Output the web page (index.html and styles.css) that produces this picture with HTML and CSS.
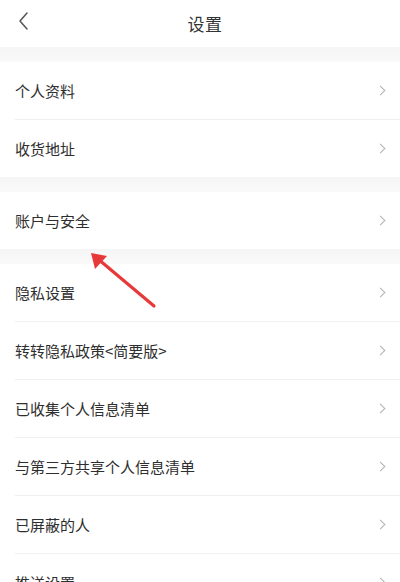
FILE: index.html
```html
<!DOCTYPE html>
<html lang="zh">
<head>
<meta charset="utf-8">
<link rel="stylesheet" href="styles.css">
</head>
<body>
<div class="page">
  <header class="topbar">
    <svg class="back" width="12" height="20" viewBox="0 0 12 20"><path d="M10 2 L3 10 L10 18" fill="none" stroke="#555" stroke-width="1.5" stroke-linecap="round" stroke-linejoin="round"/></svg>
    <div class="title">设置</div>
  </header>
  <div class="gap"></div>
  <div class="group">
    <div class="row"><span>个人资料</span><i class="chev"></i></div>
    <div class="row"><span>收货地址</span><i class="chev"></i></div>
  </div>
  <div class="gap"></div>
  <div class="group">
    <div class="row"><span>账户与安全</span><i class="chev"></i></div>
  </div>
  <div class="gap"></div>
  <div class="group">
    <div class="row"><span>隐私设置</span><i class="chev"></i></div>
    <div class="row"><span>转转隐私政策&lt;简要版&gt;</span><i class="chev"></i></div>
    <div class="row"><span>已收集个人信息清单</span><i class="chev"></i></div>
    <div class="row"><span>与第三方共享个人信息清单</span><i class="chev"></i></div>
    <div class="row"><span>已屏蔽的人</span><i class="chev"></i></div>
    <div class="row"><span>推送设置</span><i class="chev"></i></div>
  </div>
  <svg class="arrow" width="90" height="80" viewBox="0 0 90 80">
    <line x1="72" y1="64" x2="16" y2="17" stroke="#e8393a" stroke-width="3.2" stroke-linecap="round"/>
    <polygon points="9,11 25,14 13,27" fill="#e8393a"/>
  </svg>
</div>
</body>
</html>
```
FILE: styles.css
```css
* { box-sizing: border-box; }
html, body { margin: 0; padding: 0; }
body { background: #fff; font-family: "Noto Sans CJK SC", "Noto Sans", sans-serif; color: #2e2e2e; }
.page { position: relative; width: 400px; height: 582px; overflow: hidden; }
.topbar { height: 47px; display: flex; align-items: center; justify-content: center; position: relative; background: #fff; }
.back { position: absolute; left: 17px; top: 11px; }
.title { font-size: 17px; color: #333; margin-left: 10px; letter-spacing: 0.5px; }
.gap { height: 15px; background: linear-gradient(#f5f5f5, #fafafa); }
.group { background: #fff; }
.row { height: 58px; margin-left: 15px; display: flex; align-items: center; justify-content: space-between; padding-right: 12px; border-bottom: 1px solid #f0f0f0; font-size: 15px; color: #2e2e2e; }
.row span { margin-top: -1px; }
.group .row:last-child { border-bottom: none; height: 57px; }
.chev { width: 7px; height: 7px; border-top: 1.3px solid #b0b0b0; border-right: 1.3px solid #b0b0b0; transform: rotate(45deg); display: block; margin-right: 4px; }
.arrow { position: absolute; left: 82px; top: 242px; }
```
